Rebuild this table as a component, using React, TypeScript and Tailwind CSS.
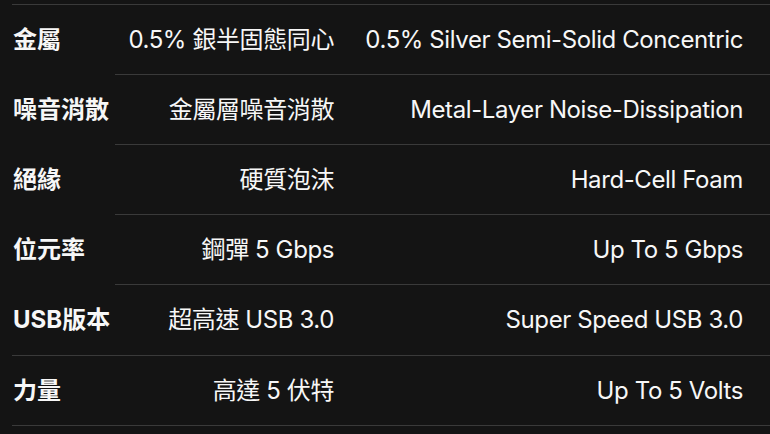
const ROWS = [
  { label: '金屬', zh: '0.5% 銀半固態同心', en: '0.5% Silver Semi-Solid Concentric', full: true, h: 'h-[70px]' },
  { label: '噪音消散', zh: '金屬層噪音消散', en: 'Metal-Layer Noise-Dissipation', full: false, h: 'h-[70px]' },
  { label: '絕緣', zh: '硬質泡沫', en: 'Hard-Cell Foam', full: false, h: 'h-[70px]' },
  { label: '位元率', zh: '鋼彈 5 Gbps', en: 'Up To 5 Gbps', full: false, h: 'h-[70px]' },
  { label: 'USB版本', zh: '超高速 USB 3.0', en: 'Super Speed USB 3.0', full: false, h: 'h-[71px]' },
  { label: '力量', zh: '高達 5 伏特', en: 'Up To 5 Volts', full: true, h: 'h-[70px]' },
];

export default function App() {
  return (
    <div
      className="h-[434px] w-[770px] overflow-hidden bg-[#141414] pl-[12px] pt-[4px] text-[24px] text-[#f7f7f7]"
      style={{ fontFamily: 'Inter, "Noto Sans CJK TC", sans-serif' }}
    >
      {ROWS.map((r) => (
        <div key={r.label} className={`flex ${r.h}`}>
          <div
            className={`flex w-[103px] shrink-0 items-center border-t pl-[1px] font-bold ${
              r.full ? 'border-[#3a3a3a]' : 'border-transparent'
            }`}
          >
            {r.label}
          </div>
          <div className="flex w-[219px] shrink-0 items-center justify-end border-t border-[#3a3a3a] tracking-[-0.4px]">
            {r.zh}
          </div>
          <div className="flex flex-1 items-center justify-end border-t border-[#3a3a3a] pr-[27px] tracking-[-0.4px]">
            {r.en}
          </div>
        </div>
      ))}
      <div className="border-t border-[#3a3a3a]" />
    </div>
  );
}
